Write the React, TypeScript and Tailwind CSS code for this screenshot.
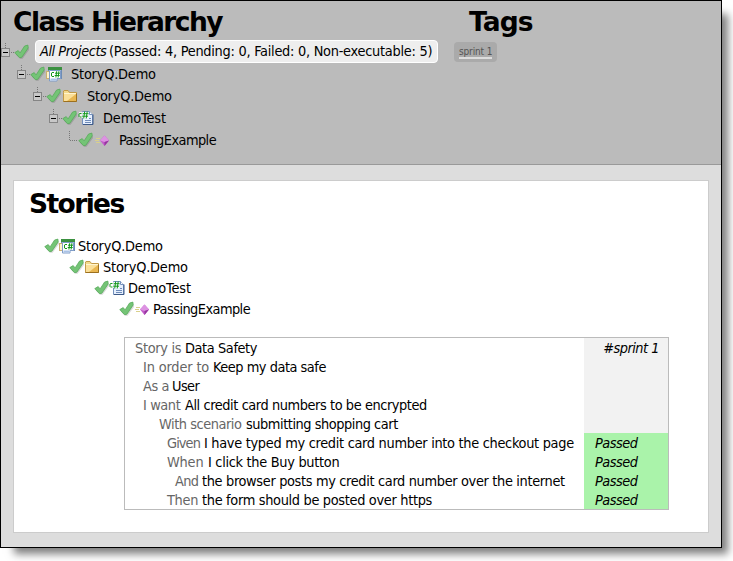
import React from "react";

type Kind = "project" | "folder" | "class" | "method";

function Check() {
  return (
    <svg width="16" height="16" viewBox="0 0 16 16" className="shrink-0">
      <path d="M1.500 10.500 4.800 9 7 11 12 4.500 14.800 3.500 15 6 8.600 14.800 6.500 15Z" fill="#000" opacity=".14" />
      <path d="M.8 8.600 4.200 6.600 6.100 8.900 10.600 2 13.900 1.100 14.200 3.900 7.800 13.300 5.500 13.700Z" fill="#74c476" stroke="#58a95b" strokeWidth=".8" strokeLinejoin="round" />
    </svg>
  );
}

function Icon({ kind }: { kind: Kind }) {
  return (
    <svg width="16" height="16" viewBox="0 0 16 16" className="shrink-0">
      {kind === "project" && (
        <>
          <rect x="2.500" y="1.500" width="13" height="11" fill="#dfe9f7" stroke="#6d8cb5" />
          <rect x="2" y="1" width="14" height="3" fill="#3b9140" />
          <rect x=".5" y="5.500" width="5" height="7" fill="#fff3c9" stroke="#c9b070" />
          <path d="M3.500 4.500h11v8h-3.500v2.500H3.500Z" fill="#fff" stroke="#7f9cc8" />
          <path d="M4.500 12.500h6v2h-6Z" fill="#a9c2e6" />
          <g stroke="#12981a" fill="none">
            <path d="M8 6.500H6L5.500 7v3l.5.500h2" />
            <path d="M10.700 5.200 9.900 11.500M12.900 5.200 12.100 11.500M9 7.200h5M8.700 9.500h5" />
          </g>
        </>
      )}
      {kind === "folder" && (
        <>
          <path d="M1.500 4.500V3L2 2.500h4L7.500 4.500h7v9h-13Z" fill="#f3d98c" stroke="#c39a48" />
          <path d="M2 6h12v7H2Z" fill="#fbe09a" />
          <path d="M14 6v7H5Z" fill="#e3a93a" opacity=".75" />
          <path d="M1.500 13.500h13v-8" fill="none" stroke="#9c701f" />
          <path d="M2 5.500h12" stroke="#fff5cf" />
        </>
      )}
      {kind === "class" && (
        <>
          <path d="M4.500 1.500h7l3 3v10h-10Z" fill="#e6effd" stroke="#7390bd" />
          <path d="M11.500 1.500v3h3" fill="#fff" stroke="#7390bd" />
          <path d="M5 14.500h10v-10" fill="none" stroke="#3e5a88" />
          <path d="M7 10.500h6M7 12.500h6M11 8.500h2" stroke="#6f8cba" />
          <path d="M1 2h9v6H1Z" fill="#fff" opacity=".75" />
          <g stroke="#12981a" fill="none">
            <path d="M3.500 3.500H1.500L1 4v2.500l.5.500h2" />
            <path d="M6.700 1.500 5.700 8.500M9.200 1.500 8.200 8.500M4.800 3.700h5.700M4.300 6.200h5.700" />
          </g>
        </>
      )}
      {kind === "method" && (
        <>
          <path d="M2 6.500h4M1 8.500h4M2 10.500h4" stroke="#d9d08c" />
          <path d="M10.500 3.500 15 8.500 10.500 14 6 8.500Z" fill="#c35ccb" />
          <path d="M10.500 3.500 15 8.500 10.500 10 6 8.500Z" fill="#dd92e2" />
          <path d="M10.500 10 15 8.500 10.500 14Z" fill="#96369f" />
        </>
      )}
    </svg>
  );
}

function Expander() {
  return (
    <svg width="13" height="18" viewBox="0 0 13 18" className="shrink-0">
      <path d="M4.500 0v5M10 9.500h3" stroke="#777" strokeDasharray="1 1" />
      <rect x=".5" y="5.500" width="8" height="8" fill="#c8c8c8" stroke="#858585" />
      <path d="M2 9.500h5" stroke="#000" />
    </svg>
  );
}

function Leaf() {
  return (
    <svg width="13" height="18" viewBox="0 0 13 18" className="shrink-0">
      <path d="M4.500 0v9.500h9" fill="none" stroke="#777" strokeDasharray="1 1" />
    </svg>
  );
}

const tree: { kind: Kind; name: string; pad: string; storyPad: string; ls: string }[] = [
  { kind: "project", name: "StoryQ.Demo", pad: "pl-[16px]", storyPad: "pl-[30px]", ls: "tracking-[-0.2px]" },
  { kind: "folder", name: "StoryQ.Demo", pad: "pl-[32px]", storyPad: "pl-[55px]", ls: "tracking-[-0.2px]" },
  { kind: "class", name: "DemoTest", pad: "pl-[48px]", storyPad: "pl-[80px]", ls: "tracking-[-0.1px]" },
  { kind: "method", name: "PassingExample", pad: "pl-[64px]", storyPad: "pl-[105px]", ls: "tracking-[-0.55px]" },
];

const steps = [
  { pad: "pl-[10px]", label: "Story is", text: "Data Safety", w: "w-[50px]", ls: "tracking-[-0.4px]", lls: "tracking-[-0.3px]" },
  { pad: "pl-[18px]", label: "In order to", text: "Keep my data safe", w: "w-[70px]", ls: "tracking-[-0.47px]", lls: "tracking-[-0.15px]" },
  { pad: "pl-[18px]", label: "As a", text: "User", w: "w-[29px]", ls: "tracking-[-0.6px]", lls: "tracking-[-0.4px]" },
  { pad: "pl-[18px]", label: "I want", text: "All credit card numbers to be encrypted", w: "w-[42px]", ls: "tracking-[-0.42px]", lls: "tracking-[-0.4px]" },
  { pad: "pl-[34px]", label: "With scenario", text: "submitting shopping cart", w: "w-[87px]", ls: "tracking-[-0.45px]", lls: "tracking-[-0.45px]" },
  { pad: "pl-[42px]", label: "Given", text: "I have typed my credit card number into the checkout page", w: "w-[37px]", ls: "tracking-[-0.3px]", lls: "tracking-[-0.9px]", passed: true },
  { pad: "pl-[42px]", label: "When", text: "I click the Buy button", w: "w-[41px]", ls: "tracking-[-0.3px]", lls: "tracking-[-0.2px]", passed: true },
  { pad: "pl-[50px]", label: "And", text: "the browser posts my credit card number over the internet", w: "w-[27px]", ls: "tracking-[-0.34px]", lls: "tracking-[-0.7px]", passed: true },
  { pad: "pl-[42px]", label: "Then", text: "the form should be posted over https", w: "w-[35px]", ls: "tracking-[-0.32px]", lls: "tracking-[-0.3px]", passed: true },
];

export default function App() {
  return (
    <div className="h-[561px] w-[733px] overflow-hidden bg-white font-['DejaVu_Sans_Condensed','DejaVu_Sans',sans-serif] text-[14.4px] tracking-[-0.4px] whitespace-nowrap text-black">
      <div className="h-[548px] w-[722px] border border-black bg-[#ddd] shadow-[10px_10px_8px_-4px_rgba(0,0,0,0.5)]">
        <header className="flex h-[164px] border-b border-[#999] bg-[#bbb]">
          <div className="w-[453px]">
            <h1 className="h-[39px] pt-[4px] pl-[12px] font-['DejaVu_Sans',sans-serif] text-[26.5px] leading-[34px] font-bold tracking-[-1.55px]">Class Hierarchy</h1>
            <div className="flex h-[23px] items-center">
              <Expander />
              <Check />
              <div className="ml-[5px] flex h-[23px] w-[403px] items-center rounded border border-white bg-[#eee] pl-1">
                <i className="w-[69px] shrink-0 tracking-[-0.45px]">All Projects</i>
                <span className="tracking-[-0.26px]">(Passed: 4, Pending: 0, Failed: 0, Non-executable: 5)</span>
              </div>
            </div>
            {tree.map((n, i) => (
              <div key={i} className={`flex h-[22px] items-center ${n.pad}`}>
                {i < 3 ? <Expander /> : <Leaf />}
                <Check />
                <Icon kind={n.kind} />
                <span className={`ml-[9px] leading-[22px] ${n.ls}`}>{n.name}</span>
              </div>
            ))}
          </div>
          <div>
            <h1 className="h-[41px] pt-[4px] pl-[15px] font-['DejaVu_Sans',sans-serif] text-[26.5px] leading-[34px] font-bold tracking-[-0.9px]">Tags</h1>
            <div className="h-[20px] w-[43px] rounded bg-[#aaa] px-[5px] pt-[3px]">
              <div className="h-[14px] border-b-2 border-[#ddd] text-[10px] leading-[13px] tracking-[-0.15px] text-[#555]">sprint 1</div>
            </div>
          </div>
        </header>
        <main className="mt-[15px] ml-[12px] h-[353px] w-[696px] border border-[#ccc] bg-white">
          <h1 className="h-[54px] pt-[6px] pl-[15px] font-['DejaVu_Sans',sans-serif] text-[26.5px] leading-[34px] font-bold tracking-[-1.6px]">Stories</h1>
          {tree.map((n, i) => (
            <div key={i} className={`flex h-[21px] items-center ${n.storyPad}`}>
              <Check />
              <div className="-ml-px">
                <Icon kind={n.kind} />
              </div>
              <span className={`ml-[3px] pt-[2px] leading-[19px] ${n.ls}`}>{n.name}</span>
            </div>
          ))}
          <div className="mt-[18px] ml-[110px] h-[173px] w-[545px] border border-[#bbb]">
            {steps.map((s, i) => (
              <div key={i} className="flex h-[19px] leading-[21px]">
                <div className={`flex w-[459px] ${s.pad}`}>
                  <span className={`shrink-0 text-[#666] ${s.lls} ${s.w}`}>{s.label}</span>
                  <span className={s.ls}>{s.text}</span>
                </div>
                <div className={`flex-1 tracking-[-0.5px] italic ${s.passed ? "bg-[#aaf3aa] pl-[11px]" : "bg-[#f2f2f2] pr-[9px] text-right"}`}>
                  {s.passed ? "Passed" : i === 0 ? "#sprint 1" : ""}
                </div>
              </div>
            ))}
          </div>
        </main>
      </div>
    </div>
  );
}
